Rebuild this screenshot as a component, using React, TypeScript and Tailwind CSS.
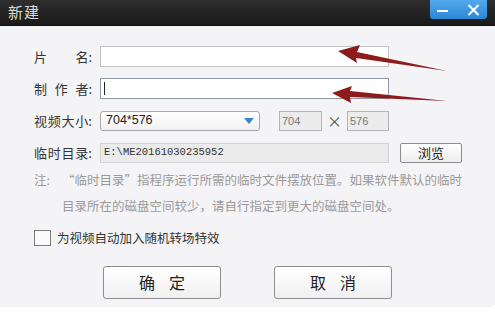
const cjk = { fontFamily: '"Noto Sans CJK SC", "Noto Sans", sans-serif' };

function Label({ chars }: { chars: string[] }) {
  return (
    <div className="w-[58px] flex justify-between text-[13px] text-[#333] leading-none mr-[8px]">
      {chars.map((c, i) => (
        <span key={i}>{c}</span>
      ))}
    </div>
  );
}

function Arrows() {
  return (
    <svg className="absolute left-0 top-0 pointer-events-none" width="495" height="318">
      <path d="M447 71 L356 58 L357 63 L338 51 L360 45 L357 52 Z" fill="#8e1b1b" />
      <path d="M447 101 L350 97 L351 103 L332 93 L352 86 L350 91 Z" fill="#8e1b1b" />
    </svg>
  );
}

export default function App() {
  return (
    <div className="relative w-[495px] h-[318px] bg-white overflow-hidden" style={cjk}>
      <div className="w-[495px] h-[307px] bg-[#f4f4f6] rounded-br-[4px] flex flex-col">
        <div className="h-[26px] bg-gradient-to-b from-[#2e2e2e] to-[#1a1a1a] border-b border-[#111] flex items-center justify-between pl-[8px] pr-[8px]">
          <span className="text-[15px] text-[#dcdcdc] tracking-[1px]">新建</span>
          <div className="self-start w-[57px] h-[19px] rounded-b-[3px] bg-gradient-to-b from-[#52a9ec] to-[#2b86d6] flex items-center justify-between px-[7px]">
            <div className="w-[11px] h-[2px] bg-white mt-[2px]" />
            <svg width="13" height="12" viewBox="0 0 13 12">
              <path d="M1.5 1 L11.5 11 M11.5 1 L1.5 11" stroke="white" strokeWidth="2" />
            </svg>
          </div>
        </div>

        <div className="flex flex-col gap-[11px] pt-[20px] pl-[34px]">
          <div className="flex items-center h-[21px]">
            <Label chars={["片", "名:"]} />
            <div className="w-[289px] h-[21px] bg-white border border-[#c4c4c4]" />
          </div>
          <div className="flex items-center h-[21px]">
            <Label chars={["制", "作", "者:"]} />
            <div className="w-[289px] h-[21px] bg-white border border-[#8f9aa6] flex items-center pl-[3px]">
              <div className="w-px h-[13px] bg-[#222]" />
            </div>
          </div>
          <div className="flex items-center h-[21px]">
            <Label chars={["视", "频", "大", "小:"]} />
            <div className="w-[160px] h-[20px] rounded-[3px] bg-gradient-to-b from-white to-[#f1f1f1] border border-[#a9a9a9] flex items-center justify-between pl-[5px] pr-[5px]">
              <span className="text-[12.5px] text-[#222]" style={{ fontFamily: '"Liberation Sans", sans-serif' }}>704*576</span>
              <svg width="10" height="6" viewBox="0 0 10 6">
                <path d="M0 0 L10 0 L5 6 Z" fill="#3b84c6" />
              </svg>
            </div>
            <div className="ml-[19px] w-[43px] h-[20px] bg-[#ececec] border border-[#b4b4b4] text-[11px] text-[#777] pl-[2px] leading-[18px]" style={{ fontFamily: '"Liberation Sans", sans-serif' }}>704</div>
            <span className="w-[25px] text-center text-[15px] text-[#555] leading-none">×</span>
            <div className="w-[42px] h-[20px] bg-[#ececec] border border-[#b4b4b4] text-[11px] text-[#777] pl-[2px] leading-[18px]" style={{ fontFamily: '"Liberation Sans", sans-serif' }}>576</div>
          </div>
          <div className="flex items-center h-[21px]">
            <Label chars={["临", "时", "目", "录:"]} />
            <div className="w-[289px] h-[20px] bg-[#ebebeb] border border-[#d2d2d2] flex items-center pl-[3px]">
              <span className="text-[10.5px] text-[#333]" style={{ fontFamily: '"Liberation Mono", monospace' }}>E:\ME20161030235952</span>
            </div>
            <button className="ml-[11px] w-[62px] h-[20px] rounded-[2px] border border-[#8c8c8c] bg-gradient-to-b from-white to-[#eeeeee] text-[13px] text-[#222] leading-none">浏览</button>
          </div>
        </div>

        <div className="pl-[34px] pt-[4px] text-[12.5px] text-[#9a9a9a] leading-[26px] flex">
          <span className="w-[28px] shrink-0">注:</span>
          <div className="flex flex-col">
            <span className="whitespace-nowrap">“临时目录”指程序运行所需的临时文件摆放位置。如果软件默认的临时</span>
            <span className="whitespace-nowrap">目录所在的磁盘空间较少，请自行指定到更大的磁盘空间处。</span>
          </div>
        </div>

        <div className="pl-[34px] mt-[10px] flex items-center gap-[6px]">
          <div className="w-[17px] h-[16px] border border-[#7a7a7a] bg-[#fafafa]" />
          <span className="text-[12.5px] text-[#333]">为视频自动加入随机转场特效</span>
        </div>

        <div className="mt-[18px] flex pl-[103px] gap-[53px]">
          <button className="w-[118px] h-[33px] rounded-[3px] border border-[#8e8e8e] bg-gradient-to-b from-white to-[#f0f0f0] text-[16px] text-[#222] tracking-[14px] pl-[14px]">确定</button>
          <button className="w-[118px] h-[33px] rounded-[3px] border border-[#8e8e8e] bg-gradient-to-b from-white to-[#f0f0f0] text-[16px] text-[#222] tracking-[14px] pl-[14px]">取消</button>
        </div>
      </div>
      <Arrows />
    </div>
  );
}
